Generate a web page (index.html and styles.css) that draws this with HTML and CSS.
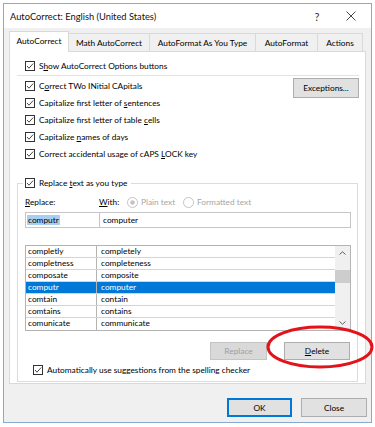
FILE: index.html
```html
<!DOCTYPE html>
<html>
<head>
<meta charset="utf-8">
<title>AutoCorrect</title>
<link rel="stylesheet" href="styles.css">
</head>
<body>
<div class="dialog">
  <div class="titlebar">
    <span class="title">AutoCorrect: English (United States)</span>
    <span class="tb-btn tb-help">?</span>
    <span class="tb-btn tb-close"><svg width="10" height="10" viewBox="0 0 10 10"><path d="M0.5 0.5 L9.5 9.5 M9.5 0.5 L0.5 9.5" stroke="#333" stroke-width="0.9" fill="none"/></svg></span>
  </div>
  <div class="client">
    <div class="tabs">
      <div class="tab tab--active tab--w1">AutoCorrect</div>
      <div class="tab tab--w2">Math AutoCorrect</div>
      <div class="tab tab--w3">AutoFormat As You Type</div>
      <div class="tab tab--w4">AutoFormat</div>
      <div class="tab tab--w5">Actions</div>
    </div>
    <div class="panel">
      <div class="cb-row">
        <svg class="chk" viewBox="0 0 10 10"><rect x="0.5" y="0.5" width="9" height="9" fill="#fff" stroke="#333"/><path d="M2 5 L4 7.2 L8.2 2.5" fill="none" stroke="#333" stroke-width="0.9"/></svg>
        <span>S<u>h</u>ow AutoCorrect Options buttons</span>
      </div>
      <div class="sep"></div>
      <div class="opts">
        <div class="opts-list">
          <div class="cb-row">
            <svg class="chk" viewBox="0 0 10 10"><rect x="0.5" y="0.5" width="9" height="9" fill="#fff" stroke="#333"/><path d="M2 5 L4 7.2 L8.2 2.5" fill="none" stroke="#333" stroke-width="0.9"/></svg>
            <span>C<u>o</u>rrect TWo INitial CApitals</span>
          </div>
          <div class="cb-row">
            <svg class="chk" viewBox="0 0 10 10"><rect x="0.5" y="0.5" width="9" height="9" fill="#fff" stroke="#333"/><path d="M2 5 L4 7.2 L8.2 2.5" fill="none" stroke="#333" stroke-width="0.9"/></svg>
            <span>Capitalize first letter of <u>s</u>entences</span>
          </div>
          <div class="cb-row">
            <svg class="chk" viewBox="0 0 10 10"><rect x="0.5" y="0.5" width="9" height="9" fill="#fff" stroke="#333"/><path d="M2 5 L4 7.2 L8.2 2.5" fill="none" stroke="#333" stroke-width="0.9"/></svg>
            <span>Capitalize first letter of table <u>c</u>ells</span>
          </div>
          <div class="cb-row">
            <svg class="chk" viewBox="0 0 10 10"><rect x="0.5" y="0.5" width="9" height="9" fill="#fff" stroke="#333"/><path d="M2 5 L4 7.2 L8.2 2.5" fill="none" stroke="#333" stroke-width="0.9"/></svg>
            <span>Capitalize <u>n</u>ames of days</span>
          </div>
          <div class="cb-row">
            <svg class="chk" viewBox="0 0 10 10"><rect x="0.5" y="0.5" width="9" height="9" fill="#fff" stroke="#333"/><path d="M2 5 L4 7.2 L8.2 2.5" fill="none" stroke="#333" stroke-width="0.9"/></svg>
            <span>Correct accidental usage of cAPS <u>L</u>OCK key</span>
          </div>
        </div>
        <div class="btn btn--exc">Exceptions...</div>
      </div>
      <fieldset class="group">
        <legend class="cb-row legend">
          <svg class="chk" viewBox="0 0 10 10"><rect x="0.5" y="0.5" width="9" height="9" fill="#fff" stroke="#333"/><path d="M2 5 L4 7.2 L8.2 2.5" fill="none" stroke="#333" stroke-width="0.9"/></svg>
          <span>Replace <u>t</u>ext as you type</span>
        </legend>
        <div class="labels">
          <span class="lbl-replace"><u>R</u>eplace:</span>
          <span class="lbl-with"><u>W</u>ith:</span>
          <span class="radio radio--on"><svg class="rad" viewBox="0 0 11 11"><circle cx="5.5" cy="5.5" r="5" fill="#fff" stroke="#c4c4c4"/><circle cx="5.5" cy="5.5" r="2.3" fill="#c4c4c4"/></svg>Plain text</span>
          <span class="radio"><svg class="rad" viewBox="0 0 11 11"><circle cx="5.5" cy="5.5" r="5" fill="#fff" stroke="#c4c4c4"/></svg>Formatted text</span>
        </div>
        <div class="inputs">
          <div class="field field--replace"><span class="sel">computr</span></div>
          <div class="field field--with">computer</div>
        </div>
        <div class="list">
          <div class="list-body">
            <div class="row"><span class="c1">completly</span><span class="c2">completely</span></div>
            <div class="row"><span class="c1">completness</span><span class="c2">completeness</span></div>
            <div class="row"><span class="c1">composate</span><span class="c2">composite</span></div>
            <div class="row row--sel"><span class="c1">computr</span><span class="c2">computer</span></div>
            <div class="row"><span class="c1">comtain</span><span class="c2">contain</span></div>
            <div class="row"><span class="c1">comtains</span><span class="c2">contains</span></div>
            <div class="row row--last"><span class="c1">comunicate</span><span class="c2">communicate</span></div>
          </div>
          <div class="scroll">
            <svg class="arrow" viewBox="0 0 7 4"><path d="M0.5 3.5 L3.5 0.8 L6.5 3.5" fill="none" stroke="#606060" stroke-width="1"/></svg>
            <div class="track"><div class="thumb"></div></div>
            <svg class="arrow" viewBox="0 0 7 4"><path d="M0.5 0.5 L3.5 3.2 L6.5 0.5" fill="none" stroke="#606060" stroke-width="1"/></svg>
          </div>
        </div>
        <div class="list-btns">
          <div class="btn btn--disabled btn--replace">Replace</div>
          <div class="btn btn--delete"><u>D</u>elete</div>
        </div>
        <div class="cb-row">
          <svg class="chk" viewBox="0 0 10 10"><rect x="0.5" y="0.5" width="9" height="9" fill="#fff" stroke="#333"/><path d="M2 5 L4 7.2 L8.2 2.5" fill="none" stroke="#333" stroke-width="0.9"/></svg>
          <span>Automatically use suggestions from the spelling checker</span>
        </div>
      </fieldset>
    </div>
    <div class="footer">
      <div class="btn btn--ok">OK</div>
      <div class="btn btn--close">Close</div>
    </div>
  </div>
</div>
<svg class="annot" viewBox="0 0 112 46" width="112" height="46"><ellipse cx="56" cy="23" rx="52" ry="20" fill="none" stroke="#e3131b" stroke-width="3"/></svg>
</body>
</html>
```
FILE: styles.css
```css
* { box-sizing: border-box; }
html, body { margin: 0; padding: 0; background: #fff; }
body {
  width: 375px;
  height: 427px;
  padding: 3px 0 0 3px;
  position: relative;
  overflow: hidden;
  font-family: Lato, "Noto Sans", sans-serif;
  font-size: 8.3px;
  color: #000;
}
u { text-decoration: underline; text-underline-offset: 1px; }

.dialog {
  width: 369px;
  height: 420px;
  border: 1px solid #88a9d4;
  background: #f0f0f0;
  display: flex;
  flex-direction: column;
}

.titlebar {
  height: 24px;
  flex: none;
  background: #fff;
  display: flex;
  align-items: center;
  padding: 0 5px 0 6px;
  font-size: 9.3px;
  color: #111;
}
.title { flex: 1; }
.tb-btn { width: 30px; display: flex; justify-content: center; align-items: center; }
.tb-help { margin-right: 4px; font-size: 11px; color: #333; }

.client {
  flex: 1;
  display: flex;
  flex-direction: column;
  padding: 3px 4px 0 5px;
}

.tabs {
  height: 20px;
  display: flex;
  align-items: flex-end;
  position: relative;
  z-index: 1;
}
.tab {
  height: 18px;
  display: flex;
  align-items: center;
  justify-content: center;
  border-top: 1px solid #d9d9d9;
  border-right: 1px solid #d9d9d9;
  background: #f0f0f0;
  white-space: nowrap;
}
.tab--active {
  height: 21px;
  margin-bottom: -1px;
  background: #fff;
  border-left: 1px solid #d9d9d9;
  padding-bottom: 2px;
}
.tab--w1 { width: 60px; }
.tab--w2 { width: 81px; }
.tab--w3 { width: 106px; }
.tab--w4 { width: 62px; }
.tab--w5 { width: 45px; }

.panel {
  width: 357px;
  height: 333px;
  flex: none;
  background: #fff;
  border: 1px solid #d9d9d9;
  padding: 5px 6px 0 7px;
}

.cb-row {
  height: 17px;
  display: flex;
  align-items: center;
  padding-left: 8px;
  white-space: nowrap;
}
.chk { width: 10px; height: 10px; flex: none; margin-right: 4px; }

.sep { height: 1px; background: #e3e3e3; margin-top: 1px; }

.opts {
  display: flex;
  justify-content: space-between;
  align-items: flex-start;
  margin-top: 1px;
}

.btn {
  display: flex;
  align-items: center;
  justify-content: center;
  background: #e1e1e1;
  border: 1px solid #adadad;
  color: #000;
}
.btn--exc { width: 66px; height: 20px; margin-top: 1px; }

.group {
  margin: 13px 1px 0 0;
  padding: 0 6px 3px 7px;
  border: 1px solid #dcdcdc;
  min-width: 0;
}
.legend {
  padding: 0 3px 0 2px;
  margin-left: -2px;
  height: 16px;
}

.labels {
  height: 16px;
  margin-top: 3px;
  display: flex;
  align-items: center;
  white-space: nowrap;
}
.lbl-replace { width: 74px; }
.lbl-with { width: 28px; }
.radio { display: flex; align-items: center; color: #a6a6a6; }
.radio--on { width: 56px; }
.rad { width: 11px; height: 11px; margin-right: 3px; }

.inputs { display: flex; margin-top: 2px; height: 16px; }
.field {
  height: 16px;
  border: 1px solid #c6c6c6;
  display: flex;
  align-items: center;
  padding-left: 1px;
}
.field--replace { width: 75px; }
.field--with { flex: 1; border-left: none; padding-left: 3px; }
.sel { background: #a8cff1; padding: 0 1px; }

.list {
  margin-top: 17px;
  height: 86px;
  border: 1px solid #b4b4b4;
  display: flex;
}
.list-body { flex: 1; }
.row {
  height: 12px;
  display: grid;
  grid-template-columns: 71px 1fr;
  border-bottom: 1px solid #d4d4d4;
  line-height: 11px;
}
.row--last { border-bottom: none; }
.c1 { padding-left: 2px; border-right: 1px solid #b4b4b4; }
.c2 { padding-left: 4px; }
.row--sel { background: #0078d7; color: #fff; }

.scroll {
  width: 15px;
  flex: none;
  background: #f0f0f0;
  display: flex;
  flex-direction: column;
  align-items: center;
}
.arrow { width: 7px; height: 4px; margin: 5px 0; }
.track { flex: 1; width: 100%; padding-top: 10px; }
.thumb { height: 13px; background: #cdcdcd; }

.list-btns {
  display: flex;
  justify-content: flex-end;
  gap: 17px;
  margin-top: 11px;
  padding-right: 1px;
}
.btn--replace { width: 57px; height: 18px; }
.btn--disabled { background: #d9d9d9; border-color: #c4c4c4; color: #a0a0a0; }
.btn--delete { width: 66px; height: 18px; }

.list-btns + .cb-row { margin-top: 2px; height: 16px; }

.footer {
  display: flex;
  justify-content: flex-end;
  gap: 9px;
  margin-top: 14px;
}
.btn--ok { width: 65px; height: 19px; border: 1px solid #0078d7; box-shadow: inset 0 0 0 1px #0078d7; }
.btn--close { width: 66px; height: 19px; }

.annot {
  position: absolute;
  left: 264px;
  top: 324px;
}
```
